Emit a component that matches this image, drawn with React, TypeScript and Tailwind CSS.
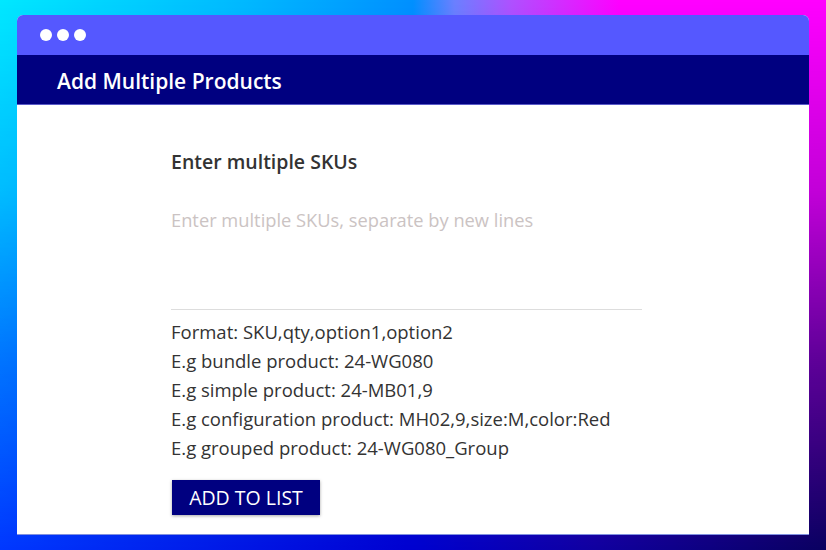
import React from 'react';

const examples = [
  'Format: SKU,qty,option1,option2',
  'E.g bundle product: 24-WG080',
  'E.g simple product: 24-MB01,9',
  'E.g configuration product: MH02,9,size:M,color:Red',
  'E.g grouped product: 24-WG080_Group',
];

export default function App() {
  return (
    <div
      className="relative w-[826px] h-[550px] overflow-hidden bg-[linear-gradient(to_right,#0038ff_0%,#0010e0_35%,#0000d0_50%,#1000a0_72%,#0a0060_100%)]"
      style={{ fontFamily: '"Open Sans", Lato, sans-serif' }}
    >
      {/* top colour layer, fades out toward the bottom */}
      <div className="absolute inset-0 bg-[linear-gradient(to_right,#00e8ff_0%,#00b8ff_30%,#0090ff_50%,#6a80ff_55%,#b050ff_62%,#ff00ff_75%,#ff00ff_100%)] [mask-image:linear-gradient(to_bottom,black_0%,rgba(0,0,0,0.75)_35%,rgba(0,0,0,0.35)_65%,transparent_100%)]" />

      <div className="relative pt-[15px] pl-[17px]">
        <div className="w-[792px] h-[520px] flex flex-col rounded-t-[6px] overflow-hidden bg-white border-b border-[#8090e0]">
          {/* window bar */}
          <div className="h-[40px] shrink-0 bg-[#5558ff] flex items-center gap-[5px] pl-[23px]">
            <span className="w-[12px] h-[12px] rounded-full bg-white" />
            <span className="w-[12px] h-[12px] rounded-full bg-white" />
            <span className="w-[12px] h-[12px] rounded-full bg-white" />
          </div>

          {/* header */}
          <div className="h-[50px] shrink-0 bg-[#000080] border-b border-[#5a5ac8] flex items-center pl-[40px] pt-[5px]">
            <h1 className="text-[21px] font-semibold text-white">Add Multiple Products</h1>
          </div>

          {/* form */}
          <div className="flex-1 pl-[154px] pt-[44px]">
            <label className="block text-[19.5px] font-semibold text-[#333] leading-[26px]">Enter multiple SKUs</label>
            <textarea
              className="block mt-[20px] w-[471px] h-[115px] resize-none outline-none border-b border-[#ddd] pt-[11px] text-[18.3px] text-[#333] placeholder:text-[#cbc3c3]"
              placeholder="Enter multiple SKUs, separate by new lines"
            />
            <div className="mt-[7px] text-[18.5px] leading-[29px] text-[#333]">
              {examples.map((line, i) => (
                <div key={i}>{line}</div>
              ))}
            </div>
            <button className="mt-[18px] ml-[1px] w-[148px] h-[35px] bg-[#000080] text-white text-[19.5px] uppercase shadow-[0_1px_3px_rgba(0,0,0,0.35)]">
              Add to list
            </button>
          </div>
        </div>
      </div>
    </div>
  );
}
